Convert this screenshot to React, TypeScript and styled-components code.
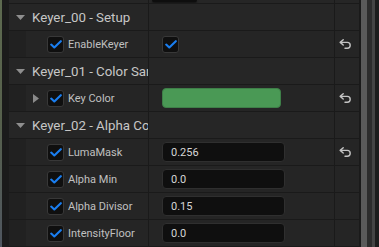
import React from "react";
import styled, { createGlobalStyle } from "styled-components";

const GlobalStyle = createGlobalStyle`
  html, body { margin: 0; padding: 0; background: #1a1a1a; }
  body { font-family: Roboto, "Noto Sans", "Liberation Sans", sans-serif; }
  * { box-sizing: border-box; }
`;

const Frame = styled.div`
  display: flex;
  width: 379px;
  height: 247px;
  overflow: hidden;
  background: #1a1a1a;
`;

const EdgeStrip = styled.div`
  width: 2px;
  background: linear-gradient(#5d6a4f, #56604c 50%, #4f5660);
`;

const Gutter = styled.div`
  width: 7px;
  background: #1b1b1b;
`;

const Details = styled.div`
  width: 350px;
  display: flex;
  flex-direction: column;
`;

const Row = styled.div<{ $h?: number }>`
  display: grid;
  grid-template-columns: 139px 185px 24px;
  column-gap: 1px;
  height: ${(p) => (p.$h ?? 26) + 1}px;
  background: #1a1a1a;
  border-bottom: 1px solid #1a1a1a;
`;

const Cell = styled.div<{ $header?: boolean }>`
  display: flex;
  align-items: center;
  min-width: 0;
  overflow: hidden;
  background: ${(p) => (p.$header ? "#262626" : "#252525")};
`;

const NameCell = styled(Cell)`
  white-space: nowrap;
`;

const Indent = styled.div`
  width: 17px;
  align-self: stretch;
  flex: none;
  background: #212121;
`;

const HeaderArrowSlot = styled.div`
  width: 23px;
  flex: none;
  display: flex;
  align-items: center;
  padding-left: 7px;
`;

const HeaderTitle = styled.span`
  font-size: 13.3px;
  color: #c6c6c6;
  white-space: nowrap;
`;

const ExpandSlot = styled.div`
  width: 21px;
  flex: none;
  display: flex;
  align-items: center;
  padding-left: 7px;
`;

const CheckBox = styled.div`
  width: 17px;
  height: 17px;
  flex: none;
  border-radius: 3px;
  background: #0f0f0f;
  border: 1px solid #383838;
  display: flex;
  align-items: center;
  justify-content: center;
`;

const Label = styled.span`
  margin-left: 4px;
  font-size: 11px;
  color: #c0c0c0;
  white-space: nowrap;
`;

const ValueCell = styled(Cell)`
  padding-left: 13px;
`;

const NumberBox = styled.div`
  width: 123px;
  height: 20px;
  border-radius: 4px;
  background: #0f0f0f;
  border: 1px solid #2f2f2f;
  display: flex;
  align-items: center;
  padding-left: 8px;
  font-size: 11px;
  color: #d6d6d6;
`;

const ColorSwatch = styled.div<{ $color: string }>`
  width: 119px;
  height: 20px;
  border-radius: 4px;
  background: ${(p) => p.$color};
  border: 1px solid #3e7f48;
`;

const TopStub = styled.div`
  width: 45px;
  height: 2px;
  align-self: flex-start;
  margin-left: 3px;
  background: #0e0e0e;
  border-radius: 0 0 4px 4px;
  box-shadow: 0 1px 2px rgba(0, 0, 0, 0.6);
`;

const ResetCell = styled(Cell)`
  padding-left: 4px;
`;

const Scrollbar = styled.div`
  display: flex;
  width: 20px;
`;

const ScrollSeg = styled.div<{ $w: number; $c: string }>`
  width: ${(p) => p.$w}px;
  background: ${(p) => p.$c};
`;

const DownArrow = () => (
  <svg width="9" height="5" viewBox="0 0 9 5">
    <polygon points="0,0 9,0 4.5,5" fill="#8e8e8e" />
  </svg>
);

const RightArrow = () => (
  <svg width="6" height="9" viewBox="0 0 6 9">
    <polygon points="0,0 6,4.5 0,9" fill="#8a8a8a" />
  </svg>
);

const Check = () => (
  <svg width="12" height="9" viewBox="0 0 12 9">
    <path d="M1.2 4.6 L4.3 7.5 L10.8 1.2" fill="none" stroke="#1a7ef0" strokeWidth="2.1" strokeLinecap="round" strokeLinejoin="round" />
  </svg>
);

const ResetIcon = () => (
  <svg width="13" height="10" viewBox="0 0 13 10">
    <path d="M4.2 0.8 L1.2 3.4 L4.2 6" fill="none" stroke="#c4c4c4" strokeWidth="1.4" strokeLinecap="round" strokeLinejoin="round" />
    <path d="M1.6 3.4 H8.3 A2.9 2.9 0 0 1 8.3 9.2 H6" fill="none" stroke="#c4c4c4" strokeWidth="1.4" strokeLinecap="round" />
  </svg>
);

type Prop = {
  label: string;
  kind: "bool" | "color" | "number";
  value?: string;
  expandable?: boolean;
  reset?: boolean;
};

type Category = { title: string; props: Prop[] };

const categories: Category[] = [
  { title: "Keyer_00 - Setup", props: [{ label: "EnableKeyer", kind: "bool", reset: true }] },
  {
    title: "Keyer_01 - Color Sampling",
    props: [{ label: "Key Color", kind: "color", value: "#4a9955", expandable: true, reset: true }],
  },
  {
    title: "Keyer_02 - Alpha Controls",
    props: [
      { label: "LumaMask", kind: "number", value: "0.256", reset: true },
      { label: "Alpha Min", kind: "number", value: "0.0" },
      { label: "Alpha Divisor", kind: "number", value: "0.15" },
      { label: "IntensityFloor", kind: "number", value: "0.0" },
    ],
  },
];

const PropertyRow = ({ p }: { p: Prop }) => (
  <Row>
    <NameCell>
      <Indent />
      <ExpandSlot>{p.expandable && <RightArrow />}</ExpandSlot>
      <CheckBox>
        <Check />
      </CheckBox>
      <Label>{p.label}</Label>
    </NameCell>
    <ValueCell>
      {p.kind === "bool" && (
        <CheckBox>
          <Check />
        </CheckBox>
      )}
      {p.kind === "color" && <ColorSwatch $color={p.value!} />}
      {p.kind === "number" && <NumberBox>{p.value}</NumberBox>}
    </ValueCell>
    <ResetCell>{p.reset && <ResetIcon />}</ResetCell>
  </Row>
);

export default function App() {
  return (
    <>
      <GlobalStyle />
      <Frame>
        <EdgeStrip />
        <Gutter />
        <Details>
          <Row $h={3}>
            <Cell $header />
            <Cell $header>
              <TopStub />
            </Cell>
            <Cell $header />
          </Row>
          {categories.map((c) => (
            <React.Fragment key={c.title}>
              <Row>
                <NameCell $header>
                  <HeaderArrowSlot>
                    <DownArrow />
                  </HeaderArrowSlot>
                  <HeaderTitle>{c.title}</HeaderTitle>
                </NameCell>
                <Cell $header />
                <Cell $header />
              </Row>
              {c.props.map((p) => (
                <PropertyRow key={p.label} p={p} />
              ))}
            </React.Fragment>
          ))}
        </Details>
        <Scrollbar>
          <ScrollSeg $w={2} $c="#1a1a1a" />
          <ScrollSeg $w={6} $c="#5a5a5a" />
          <ScrollSeg $w={5} $c="#2c2c2c" />
          <ScrollSeg $w={3} $c="#444444" />
          <ScrollSeg $w={4} $c="#1c1c1c" />
        </Scrollbar>
      </Frame>
    </>
  );
}
